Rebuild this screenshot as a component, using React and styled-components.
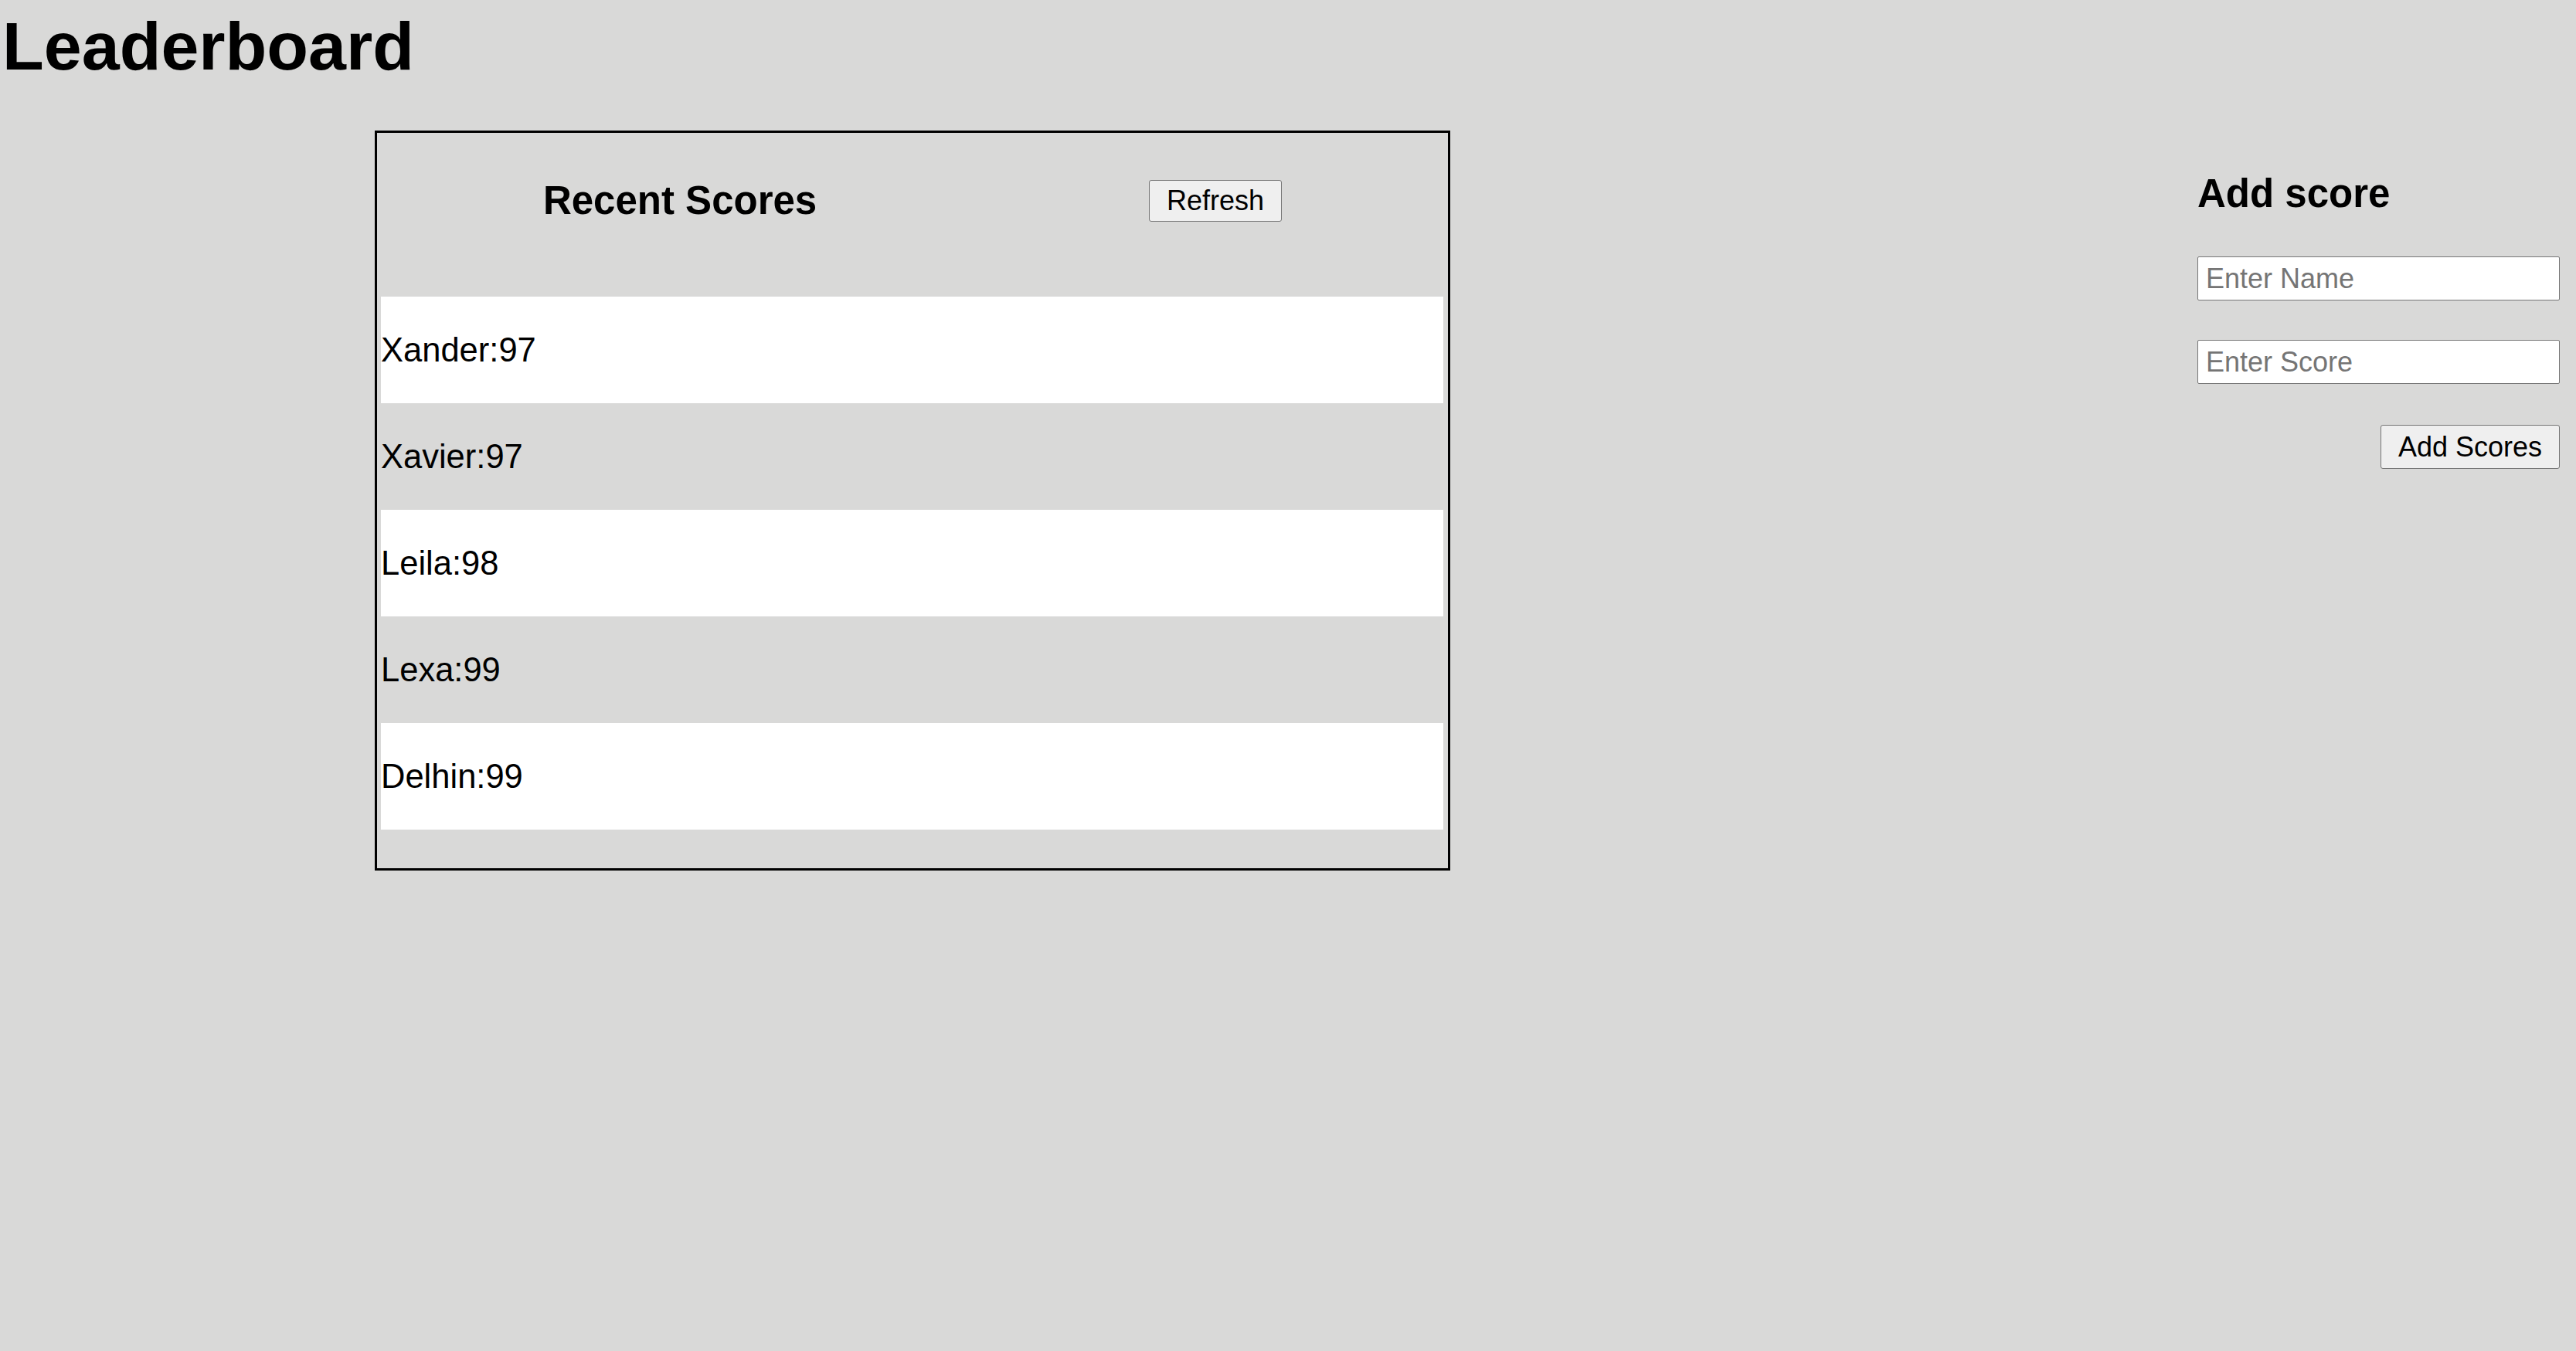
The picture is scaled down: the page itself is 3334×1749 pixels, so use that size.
import React from "react";
import styled, { createGlobalStyle } from "styled-components";

const GlobalStyle = createGlobalStyle`
  html, body {
    margin: 0;
    padding: 0;
    background: #d9d9d8;
  }
  body {
    font-family: "Liberation Sans", Arial, sans-serif;
    color: #000;
  }
  * { box-sizing: border-box; }
`;

const Page = styled.div`
  width: 3334px;
  min-height: 1749px;
  background: #d9d9d8;
`;

const Title = styled.h1`
  margin: 11px 0 61px 3px;
  font-size: 88px;
  line-height: 97px;
  font-weight: 700;
`;

const Main = styled.div`
  display: flex;
  justify-content: space-between;
  align-items: flex-start;
  padding: 0 21px 0 485px;
`;

const Board = styled.section`
  width: 1392px;
  border: 3px solid #000;
`;

const BoardHeader = styled.div`
  display: flex;
  justify-content: space-around;
  align-items: flex-start;
  padding: 59px 0 96px 0;
`;

const SectionTitle = styled.h3`
  margin: 0;
  font-size: 51px;
  line-height: 57px;
  font-weight: 700;
`;

const Button = styled.button`
  font-family: "Liberation Sans", Arial, sans-serif;
  font-size: 36px;
  height: ${(p) => p.$h}px;
  margin-top: ${(p) => p.$mt || 0}px;
  padding: 0 22px;
  background: #efefef;
  color: #000;
  border: 1px solid #767676;
  border-radius: 3px;
  display: flex;
  align-items: center;
  justify-content: center;
  line-height: 1;
`;

const List = styled.div`
  display: flex;
  flex-direction: column;
  padding: 0 6px 50px 5px;
`;

const Row = styled.div`
  height: 138px;
  display: flex;
  align-items: center;
  font-size: 43.5px;
  background: ${(p) => (p.$odd ? "#ffffff" : "transparent")};
`;

const Side = styled.aside`
  width: 469px;
  display: flex;
  flex-direction: column;
  align-items: stretch;
  gap: 51px;
  padding-top: 53px;
`;

const SideTitle = styled(SectionTitle)`
  margin-bottom: 2px;
`;

const Input = styled.input`
  height: 57px;
  width: 100%;
  font-family: "Liberation Sans", Arial, sans-serif;
  font-size: 36px;
  padding: 0 10px;
  background: #fff;
  border: 1px solid #767676;
  border-radius: 2px;
  outline: none;
  &::placeholder {
    color: #757575;
  }
`;

const ButtonRow = styled.div`
  display: flex;
  justify-content: flex-end;
`;

const scores = [
  { name: "Xander", score: 97 },
  { name: "Xavier", score: 97 },
  { name: "Leila", score: 98 },
  { name: "Lexa", score: 99 },
  { name: "Delhin", score: 99 },
];

export default function App() {
  return (
    <Page>
      <GlobalStyle />
      <Title>Leaderboard</Title>
      <Main>
        <Board>
          <BoardHeader>
            <SectionTitle>Recent Scores</SectionTitle>
            <Button $h={54} $mt={2}>Refresh</Button>
          </BoardHeader>
          <List>
            {scores.map((s, i) => (
              <Row key={s.name} $odd={i % 2 === 0}>
                {s.name}:{s.score}
              </Row>
            ))}
          </List>
        </Board>
        <Side>
          <SideTitle>Add score</SideTitle>
          <Input placeholder="Enter Name" />
          <Input placeholder="Enter Score" />
          <ButtonRow>
            <Button $h={57} $mt={2}>Add Scores</Button>
          </ButtonRow>
        </Side>
      </Main>
    </Page>
  );
}
